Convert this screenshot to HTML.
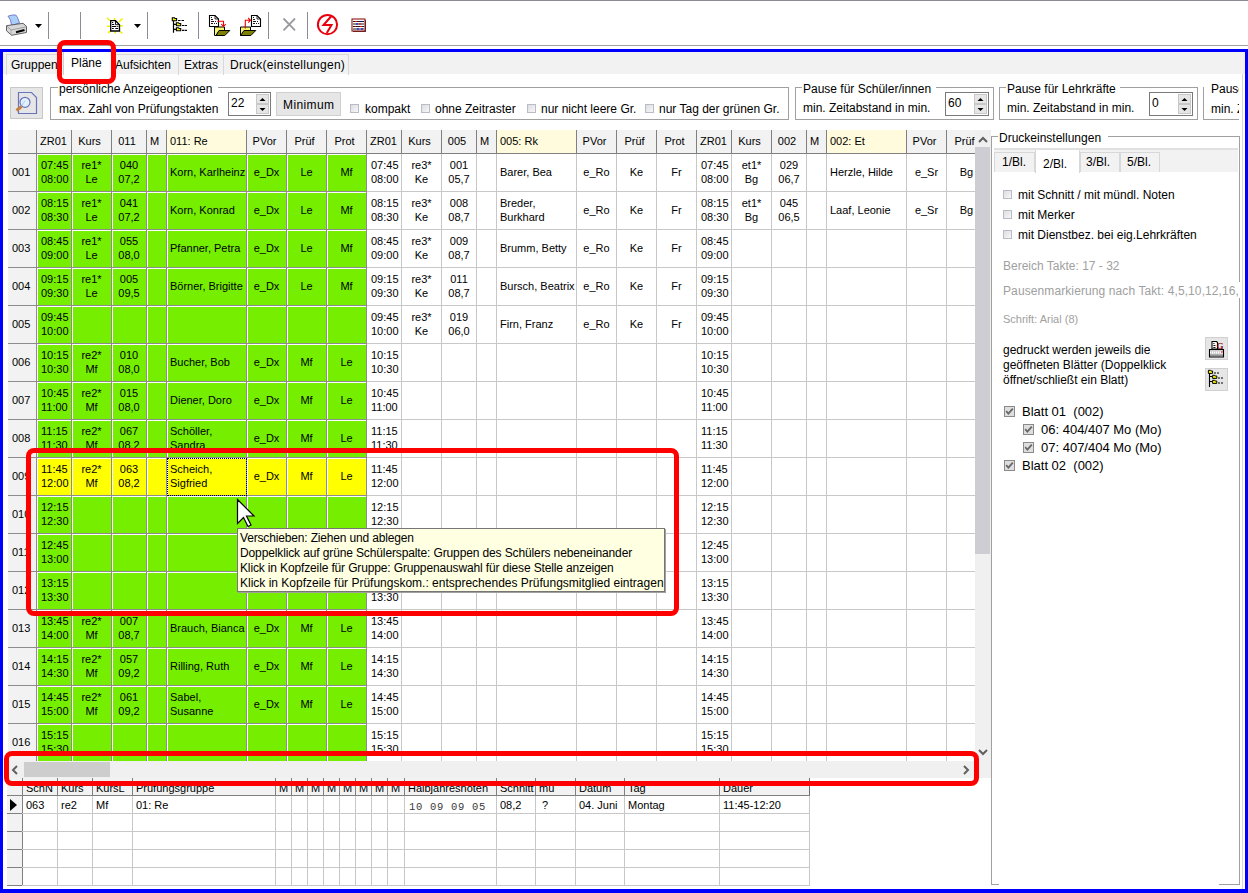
<!DOCTYPE html><html><head><meta charset="utf-8"><style>
*{margin:0;padding:0;box-sizing:border-box}
html,body{width:1248px;height:893px;overflow:hidden;background:#fff}
body{position:relative;font-family:"Liberation Sans",sans-serif;font-size:12px;color:#000}
div{position:absolute}
.t{white-space:nowrap;line-height:14px}
.g{font-size:11px;line-height:14px;white-space:nowrap}
</style></head><body>

<div style="left:0px;top:0px;width:1248px;height:1px;background:#8c8c96"></div>
<div style="left:48px;top:12px;width:1px;height:27px;background:#8c8c96"></div>
<div style="left:80px;top:12px;width:1px;height:27px;background:#8c8c96"></div>
<div style="left:147px;top:12px;width:1px;height:27px;background:#8c8c96"></div>
<div style="left:198px;top:12px;width:1px;height:27px;background:#8c8c96"></div>
<div style="left:268px;top:12px;width:1px;height:27px;background:#8c8c96"></div>
<div style="left:307px;top:12px;width:1px;height:27px;background:#8c8c96"></div>
<div style="left:0px;top:45px;width:1248px;height:1px;background:#a0a0a0"></div>
<div style="left:0px;top:49px;width:1248px;height:3px;background:#0000ff"></div>
<div style="left:0px;top:49px;width:3px;height:844px;background:#0000ff"></div>
<div style="left:1245px;top:49px;width:3px;height:844px;background:#0000ff"></div>
<div style="left:0px;top:889px;width:1248px;height:4px;background:#0000ff"></div>
<div style="left:3px;top:52px;width:1242px;height:22px;background:#f2f2f2"></div>
<div style="left:3px;top:74px;width:1242px;height:815px;background:#fff"></div>
<div style="left:1242px;top:74px;width:1px;height:815px;background:#d8d8d8"></div>
<div style="left:6px;top:54px;width:58px;height:21px;border-left:1px solid #d8d8d8;border-right:1px solid #d8d8d8;border-top:1px solid #d8d8d8"></div>
<div class="t" style="left:11px;top:58px;font-size:12px">Gruppen</div>
<div style="left:63px;top:52px;width:50px;height:23px;background:#fff;border-left:1px solid #d0d0d0;border-right:1px solid #d0d0d0"></div>
<div class="t" style="left:71px;top:56px;font-size:12px">Pläne</div>
<div style="left:113px;top:54px;width:66px;height:21px;border-left:1px solid #d8d8d8;border-right:1px solid #d8d8d8;border-top:1px solid #d8d8d8"></div>
<div class="t" style="left:115px;top:58px;font-size:12px">Aufsichten</div>
<div style="left:178px;top:54px;width:46px;height:21px;border-left:1px solid #d8d8d8;border-right:1px solid #d8d8d8;border-top:1px solid #d8d8d8"></div>
<div class="t" style="left:184px;top:58px;font-size:12px">Extras</div>
<div style="left:223px;top:54px;width:126px;height:21px;border-left:1px solid #d8d8d8;border-right:1px solid #d8d8d8;border-top:1px solid #d8d8d8"></div>
<div class="t" style="left:230px;top:58px;font-size:12px;letter-spacing:0.25px">Druck(einstellungen)</div>
<div style="left:10px;top:87px;width:33px;height:32px;background:#e6e6e6;border:1px solid #c8c8c8"></div>
<svg style="position:absolute;left:8px;top:85px" width="38" height="36" viewBox="0 0 38 36">
<path d="M10.5 7.5 H23.5 L28.5 12.5 V28.5 H10.5 Z" fill="none" stroke="#6a74bc" stroke-width="1.2"/>
<circle cx="17" cy="17.3" r="5" fill="#e4eefa" stroke="#6a74bc" stroke-width="1.2"/>
<path d="M14 20.8 Q15 18 17 16" stroke="#9cd0f8" stroke-width="1" fill="none"/>
<path d="M13.5 21.5 L8.5 25.5" stroke="#c08040" stroke-width="3"/>
</svg>
<div style="left:50px;top:87px;width:1px;height:32px;background:#a0a0a0"></div>
<div style="left:788px;top:87px;width:1px;height:33px;background:#a0a0a0"></div>
<div style="left:50px;top:119px;width:738px;height:1px;background:#a0a0a0"></div>
<div style="left:50px;top:87px;width:8px;height:1px;background:#a0a0a0"></div>
<div style="left:218px;top:87px;width:570px;height:1px;background:#a0a0a0"></div>
<div class="t" style="left:59px;top:82px;font-size:12px">persönliche Anzeigeoptionen</div>
<div class="t" style="left:59px;top:102px;font-size:12px">max. Zahl von Prüfungstakten</div>
<div style="left:228px;top:92px;width:43px;height:24px;background:#fff;border:1px solid #7a7a7a"></div>
<div class="t" style="left:231px;top:96px;font-size:12px">22</div>
<div style="left:256px;top:94px;width:13px;height:10px;background:#e6e6e6;border:1px solid #c8c8c8"></div>
<div style="left:256px;top:104px;width:13px;height:10px;background:#e6e6e6;border:1px solid #c8c8c8"></div>
<svg style="position:absolute;left:256px;top:92px" width="13" height="24"><path d="M3.5 9 L6.5 6 L9.5 9 Z" fill="#000"/><path d="M3.5 16 L6.5 19 L9.5 16 Z" fill="#000"/></svg>
<div style="left:276px;top:92px;width:65px;height:24px;background:#e6e6e6;border:1px solid #cfcfcf"></div>
<div class="t" style="left:283px;top:98px;font-size:12px;letter-spacing:0.4px">Minimum</div>
<div style="left:350px;top:104px;width:9px;height:9px;background:linear-gradient(135deg,#dcdce4,#f8f8f8);border:1px solid #b8bcc4"></div>
<div class="t" style="left:365px;top:102px;">kompakt</div>
<div style="left:421px;top:104px;width:9px;height:9px;background:linear-gradient(135deg,#dcdce4,#f8f8f8);border:1px solid #b8bcc4"></div>
<div class="t" style="left:435px;top:102px;">ohne Zeitraster</div>
<div style="left:527px;top:104px;width:9px;height:9px;background:linear-gradient(135deg,#dcdce4,#f8f8f8);border:1px solid #b8bcc4"></div>
<div class="t" style="left:541px;top:102px;">nur nicht leere Gr.</div>
<div style="left:645px;top:104px;width:9px;height:9px;background:linear-gradient(135deg,#dcdce4,#f8f8f8);border:1px solid #b8bcc4"></div>
<div class="t" style="left:659px;top:102px;">nur Tag der grünen Gr.</div>
<div style="left:795px;top:87px;width:1px;height:32px;background:#a0a0a0"></div>
<div style="left:993px;top:87px;width:1px;height:33px;background:#a0a0a0"></div>
<div style="left:795px;top:119px;width:198px;height:1px;background:#a0a0a0"></div>
<div style="left:795px;top:87px;width:7px;height:1px;background:#a0a0a0"></div>
<div style="left:936px;top:87px;width:57px;height:1px;background:#a0a0a0"></div>
<div class="t" style="left:803px;top:82px;font-size:12px">Pause für Schüler/innen</div>
<div class="t" style="left:803px;top:101px;">min. Zeitabstand in min.</div>
<div style="left:945px;top:92px;width:44px;height:24px;background:#fff;border:1px solid #7a7a7a"></div>
<div class="t" style="left:948px;top:96px;font-size:12px">60</div>
<div style="left:974px;top:94px;width:13px;height:10px;background:#e6e6e6;border:1px solid #c8c8c8"></div>
<div style="left:974px;top:104px;width:13px;height:10px;background:#e6e6e6;border:1px solid #c8c8c8"></div>
<svg style="position:absolute;left:974px;top:92px" width="13" height="24"><path d="M3.5 9 L6.5 6 L9.5 9 Z" fill="#000"/><path d="M3.5 16 L6.5 19 L9.5 16 Z" fill="#000"/></svg>
<div style="left:999px;top:87px;width:1px;height:32px;background:#a0a0a0"></div>
<div style="left:1197px;top:87px;width:1px;height:33px;background:#a0a0a0"></div>
<div style="left:999px;top:119px;width:198px;height:1px;background:#a0a0a0"></div>
<div style="left:999px;top:87px;width:7px;height:1px;background:#a0a0a0"></div>
<div style="left:1120px;top:87px;width:77px;height:1px;background:#a0a0a0"></div>
<div class="t" style="left:1007px;top:82px;font-size:12px">Pause für Lehrkräfte</div>
<div class="t" style="left:1007px;top:101px;">min. Zeitabstand in min.</div>
<div style="left:1149px;top:92px;width:44px;height:24px;background:#fff;border:1px solid #7a7a7a"></div>
<div class="t" style="left:1152px;top:96px;font-size:12px">0</div>
<div style="left:1178px;top:94px;width:13px;height:10px;background:#e6e6e6;border:1px solid #c8c8c8"></div>
<div style="left:1178px;top:104px;width:13px;height:10px;background:#e6e6e6;border:1px solid #c8c8c8"></div>
<svg style="position:absolute;left:1178px;top:92px" width="13" height="24"><path d="M3.5 9 L6.5 6 L9.5 9 Z" fill="#000"/><path d="M3.5 16 L6.5 19 L9.5 16 Z" fill="#000"/></svg>
<div style="left:1203px;top:70px;width:36px;height:55px;overflow:hidden">
<div style="left:0;top:17px;width:1px;height:32px;background:#a0a0a0"></div>
<div style="left:0;top:49px;width:40px;height:1px;background:#a0a0a0"></div>
<div class="t" style="left:8px;top:12px">Pause für Lehrkräfte</div>
<div class="t" style="left:8px;top:32px">min. Zeitabstand</div>
</div>
<div style="left:8px;top:130px;width:967px;height:631px;overflow:hidden;background:#fff">
<div style="left:0px;top:0px;width:967px;height:23px;background:#f2f2f2"></div>
<div style="left:0px;top:23px;width:28px;height:608px;background:#f2f2f2"></div>
<div style="left:30px;top:25px;width:33px;height:36px;background:#76ee00"></div>
<div style="left:65px;top:25px;width:38px;height:36px;background:#76ee00"></div>
<div style="left:105px;top:25px;width:33px;height:36px;background:#76ee00"></div>
<div style="left:140px;top:25px;width:18px;height:36px;background:#76ee00"></div>
<div style="left:160px;top:25px;width:78px;height:36px;background:#76ee00"></div>
<div style="left:240px;top:25px;width:38px;height:36px;background:#76ee00"></div>
<div style="left:280px;top:25px;width:38px;height:36px;background:#76ee00"></div>
<div style="left:320px;top:25px;width:38px;height:36px;background:#76ee00"></div>
<div style="left:30px;top:63px;width:33px;height:36px;background:#76ee00"></div>
<div style="left:65px;top:63px;width:38px;height:36px;background:#76ee00"></div>
<div style="left:105px;top:63px;width:33px;height:36px;background:#76ee00"></div>
<div style="left:140px;top:63px;width:18px;height:36px;background:#76ee00"></div>
<div style="left:160px;top:63px;width:78px;height:36px;background:#76ee00"></div>
<div style="left:240px;top:63px;width:38px;height:36px;background:#76ee00"></div>
<div style="left:280px;top:63px;width:38px;height:36px;background:#76ee00"></div>
<div style="left:320px;top:63px;width:38px;height:36px;background:#76ee00"></div>
<div style="left:30px;top:101px;width:33px;height:36px;background:#76ee00"></div>
<div style="left:65px;top:101px;width:38px;height:36px;background:#76ee00"></div>
<div style="left:105px;top:101px;width:33px;height:36px;background:#76ee00"></div>
<div style="left:140px;top:101px;width:18px;height:36px;background:#76ee00"></div>
<div style="left:160px;top:101px;width:78px;height:36px;background:#76ee00"></div>
<div style="left:240px;top:101px;width:38px;height:36px;background:#76ee00"></div>
<div style="left:280px;top:101px;width:38px;height:36px;background:#76ee00"></div>
<div style="left:320px;top:101px;width:38px;height:36px;background:#76ee00"></div>
<div style="left:30px;top:139px;width:33px;height:36px;background:#76ee00"></div>
<div style="left:65px;top:139px;width:38px;height:36px;background:#76ee00"></div>
<div style="left:105px;top:139px;width:33px;height:36px;background:#76ee00"></div>
<div style="left:140px;top:139px;width:18px;height:36px;background:#76ee00"></div>
<div style="left:160px;top:139px;width:78px;height:36px;background:#76ee00"></div>
<div style="left:240px;top:139px;width:38px;height:36px;background:#76ee00"></div>
<div style="left:280px;top:139px;width:38px;height:36px;background:#76ee00"></div>
<div style="left:320px;top:139px;width:38px;height:36px;background:#76ee00"></div>
<div style="left:30px;top:177px;width:33px;height:36px;background:#76ee00"></div>
<div style="left:65px;top:177px;width:38px;height:36px;background:#76ee00"></div>
<div style="left:105px;top:177px;width:33px;height:36px;background:#76ee00"></div>
<div style="left:140px;top:177px;width:18px;height:36px;background:#76ee00"></div>
<div style="left:160px;top:177px;width:78px;height:36px;background:#76ee00"></div>
<div style="left:240px;top:177px;width:38px;height:36px;background:#76ee00"></div>
<div style="left:280px;top:177px;width:38px;height:36px;background:#76ee00"></div>
<div style="left:320px;top:177px;width:38px;height:36px;background:#76ee00"></div>
<div style="left:30px;top:215px;width:33px;height:36px;background:#76ee00"></div>
<div style="left:65px;top:215px;width:38px;height:36px;background:#76ee00"></div>
<div style="left:105px;top:215px;width:33px;height:36px;background:#76ee00"></div>
<div style="left:140px;top:215px;width:18px;height:36px;background:#76ee00"></div>
<div style="left:160px;top:215px;width:78px;height:36px;background:#76ee00"></div>
<div style="left:240px;top:215px;width:38px;height:36px;background:#76ee00"></div>
<div style="left:280px;top:215px;width:38px;height:36px;background:#76ee00"></div>
<div style="left:320px;top:215px;width:38px;height:36px;background:#76ee00"></div>
<div style="left:30px;top:253px;width:33px;height:36px;background:#76ee00"></div>
<div style="left:65px;top:253px;width:38px;height:36px;background:#76ee00"></div>
<div style="left:105px;top:253px;width:33px;height:36px;background:#76ee00"></div>
<div style="left:140px;top:253px;width:18px;height:36px;background:#76ee00"></div>
<div style="left:160px;top:253px;width:78px;height:36px;background:#76ee00"></div>
<div style="left:240px;top:253px;width:38px;height:36px;background:#76ee00"></div>
<div style="left:280px;top:253px;width:38px;height:36px;background:#76ee00"></div>
<div style="left:320px;top:253px;width:38px;height:36px;background:#76ee00"></div>
<div style="left:30px;top:291px;width:33px;height:36px;background:#76ee00"></div>
<div style="left:65px;top:291px;width:38px;height:36px;background:#76ee00"></div>
<div style="left:105px;top:291px;width:33px;height:36px;background:#76ee00"></div>
<div style="left:140px;top:291px;width:18px;height:36px;background:#76ee00"></div>
<div style="left:160px;top:291px;width:78px;height:36px;background:#76ee00"></div>
<div style="left:240px;top:291px;width:38px;height:36px;background:#76ee00"></div>
<div style="left:280px;top:291px;width:38px;height:36px;background:#76ee00"></div>
<div style="left:320px;top:291px;width:38px;height:36px;background:#76ee00"></div>
<div style="left:30px;top:329px;width:33px;height:36px;background:#ffff00"></div>
<div style="left:65px;top:329px;width:38px;height:36px;background:#ffff00"></div>
<div style="left:105px;top:329px;width:33px;height:36px;background:#ffff00"></div>
<div style="left:140px;top:329px;width:18px;height:36px;background:#ffff00"></div>
<div style="left:160px;top:329px;width:78px;height:36px;background:#ffff00"></div>
<div style="left:240px;top:329px;width:38px;height:36px;background:#ffff00"></div>
<div style="left:280px;top:329px;width:38px;height:36px;background:#ffff00"></div>
<div style="left:320px;top:329px;width:38px;height:36px;background:#ffff00"></div>
<div style="left:30px;top:367px;width:33px;height:36px;background:#76ee00"></div>
<div style="left:65px;top:367px;width:38px;height:36px;background:#76ee00"></div>
<div style="left:105px;top:367px;width:33px;height:36px;background:#76ee00"></div>
<div style="left:140px;top:367px;width:18px;height:36px;background:#76ee00"></div>
<div style="left:160px;top:367px;width:78px;height:36px;background:#76ee00"></div>
<div style="left:240px;top:367px;width:38px;height:36px;background:#76ee00"></div>
<div style="left:280px;top:367px;width:38px;height:36px;background:#76ee00"></div>
<div style="left:320px;top:367px;width:38px;height:36px;background:#76ee00"></div>
<div style="left:30px;top:405px;width:33px;height:36px;background:#76ee00"></div>
<div style="left:65px;top:405px;width:38px;height:36px;background:#76ee00"></div>
<div style="left:105px;top:405px;width:33px;height:36px;background:#76ee00"></div>
<div style="left:140px;top:405px;width:18px;height:36px;background:#76ee00"></div>
<div style="left:160px;top:405px;width:78px;height:36px;background:#76ee00"></div>
<div style="left:240px;top:405px;width:38px;height:36px;background:#76ee00"></div>
<div style="left:280px;top:405px;width:38px;height:36px;background:#76ee00"></div>
<div style="left:320px;top:405px;width:38px;height:36px;background:#76ee00"></div>
<div style="left:30px;top:443px;width:33px;height:36px;background:#76ee00"></div>
<div style="left:65px;top:443px;width:38px;height:36px;background:#76ee00"></div>
<div style="left:105px;top:443px;width:33px;height:36px;background:#76ee00"></div>
<div style="left:140px;top:443px;width:18px;height:36px;background:#76ee00"></div>
<div style="left:160px;top:443px;width:78px;height:36px;background:#76ee00"></div>
<div style="left:240px;top:443px;width:38px;height:36px;background:#76ee00"></div>
<div style="left:280px;top:443px;width:38px;height:36px;background:#76ee00"></div>
<div style="left:320px;top:443px;width:38px;height:36px;background:#76ee00"></div>
<div style="left:30px;top:481px;width:33px;height:36px;background:#76ee00"></div>
<div style="left:65px;top:481px;width:38px;height:36px;background:#76ee00"></div>
<div style="left:105px;top:481px;width:33px;height:36px;background:#76ee00"></div>
<div style="left:140px;top:481px;width:18px;height:36px;background:#76ee00"></div>
<div style="left:160px;top:481px;width:78px;height:36px;background:#76ee00"></div>
<div style="left:240px;top:481px;width:38px;height:36px;background:#76ee00"></div>
<div style="left:280px;top:481px;width:38px;height:36px;background:#76ee00"></div>
<div style="left:320px;top:481px;width:38px;height:36px;background:#76ee00"></div>
<div style="left:30px;top:519px;width:33px;height:36px;background:#76ee00"></div>
<div style="left:65px;top:519px;width:38px;height:36px;background:#76ee00"></div>
<div style="left:105px;top:519px;width:33px;height:36px;background:#76ee00"></div>
<div style="left:140px;top:519px;width:18px;height:36px;background:#76ee00"></div>
<div style="left:160px;top:519px;width:78px;height:36px;background:#76ee00"></div>
<div style="left:240px;top:519px;width:38px;height:36px;background:#76ee00"></div>
<div style="left:280px;top:519px;width:38px;height:36px;background:#76ee00"></div>
<div style="left:320px;top:519px;width:38px;height:36px;background:#76ee00"></div>
<div style="left:30px;top:557px;width:33px;height:36px;background:#76ee00"></div>
<div style="left:65px;top:557px;width:38px;height:36px;background:#76ee00"></div>
<div style="left:105px;top:557px;width:33px;height:36px;background:#76ee00"></div>
<div style="left:140px;top:557px;width:18px;height:36px;background:#76ee00"></div>
<div style="left:160px;top:557px;width:78px;height:36px;background:#76ee00"></div>
<div style="left:240px;top:557px;width:38px;height:36px;background:#76ee00"></div>
<div style="left:280px;top:557px;width:38px;height:36px;background:#76ee00"></div>
<div style="left:320px;top:557px;width:38px;height:36px;background:#76ee00"></div>
<div style="left:30px;top:595px;width:33px;height:36px;background:#76ee00"></div>
<div style="left:65px;top:595px;width:38px;height:36px;background:#76ee00"></div>
<div style="left:105px;top:595px;width:33px;height:36px;background:#76ee00"></div>
<div style="left:140px;top:595px;width:18px;height:36px;background:#76ee00"></div>
<div style="left:160px;top:595px;width:78px;height:36px;background:#76ee00"></div>
<div style="left:240px;top:595px;width:38px;height:36px;background:#76ee00"></div>
<div style="left:280px;top:595px;width:38px;height:36px;background:#76ee00"></div>
<div style="left:320px;top:595px;width:38px;height:36px;background:#76ee00"></div>
<div style="left:159px;top:0px;width:79px;height:23px;background:#fffbdc"></div>
<div style="left:489px;top:0px;width:79px;height:23px;background:#fffbdc"></div>
<div style="left:819px;top:0px;width:79px;height:23px;background:#fffbdc"></div>
<div style="left:358px;top:61px;width:609px;height:1px;background:#c8c8c8"></div>
<div style="left:358px;top:99px;width:609px;height:1px;background:#c8c8c8"></div>
<div style="left:358px;top:137px;width:609px;height:1px;background:#c8c8c8"></div>
<div style="left:358px;top:175px;width:609px;height:1px;background:#c8c8c8"></div>
<div style="left:358px;top:213px;width:609px;height:1px;background:#c8c8c8"></div>
<div style="left:358px;top:251px;width:609px;height:1px;background:#c8c8c8"></div>
<div style="left:358px;top:289px;width:609px;height:1px;background:#c8c8c8"></div>
<div style="left:358px;top:327px;width:609px;height:1px;background:#c8c8c8"></div>
<div style="left:358px;top:365px;width:609px;height:1px;background:#c8c8c8"></div>
<div style="left:358px;top:403px;width:609px;height:1px;background:#c8c8c8"></div>
<div style="left:358px;top:441px;width:609px;height:1px;background:#c8c8c8"></div>
<div style="left:358px;top:479px;width:609px;height:1px;background:#c8c8c8"></div>
<div style="left:358px;top:517px;width:609px;height:1px;background:#c8c8c8"></div>
<div style="left:358px;top:555px;width:609px;height:1px;background:#c8c8c8"></div>
<div style="left:358px;top:593px;width:609px;height:1px;background:#c8c8c8"></div>
<div style="left:358px;top:631px;width:609px;height:1px;background:#c8c8c8"></div>
<div style="left:393px;top:23px;width:1px;height:608px;background:#c8c8c8"></div>
<div style="left:433px;top:23px;width:1px;height:608px;background:#c8c8c8"></div>
<div style="left:468px;top:23px;width:1px;height:608px;background:#c8c8c8"></div>
<div style="left:488px;top:23px;width:1px;height:608px;background:#c8c8c8"></div>
<div style="left:568px;top:23px;width:1px;height:608px;background:#c8c8c8"></div>
<div style="left:608px;top:23px;width:1px;height:608px;background:#c8c8c8"></div>
<div style="left:648px;top:23px;width:1px;height:608px;background:#c8c8c8"></div>
<div style="left:688px;top:23px;width:1px;height:608px;background:#c8c8c8"></div>
<div style="left:723px;top:23px;width:1px;height:608px;background:#c8c8c8"></div>
<div style="left:763px;top:23px;width:1px;height:608px;background:#c8c8c8"></div>
<div style="left:798px;top:23px;width:1px;height:608px;background:#c8c8c8"></div>
<div style="left:818px;top:23px;width:1px;height:608px;background:#c8c8c8"></div>
<div style="left:898px;top:23px;width:1px;height:608px;background:#c8c8c8"></div>
<div style="left:938px;top:23px;width:1px;height:608px;background:#c8c8c8"></div>
<div style="left:978px;top:23px;width:1px;height:608px;background:#c8c8c8"></div>
<div style="left:0px;top:23px;width:359px;height:1px;background:#8c8c8c"></div>
<div style="left:0px;top:61px;width:359px;height:1px;background:#8c8c8c"></div>
<div style="left:0px;top:99px;width:359px;height:1px;background:#8c8c8c"></div>
<div style="left:0px;top:137px;width:359px;height:1px;background:#8c8c8c"></div>
<div style="left:0px;top:175px;width:359px;height:1px;background:#8c8c8c"></div>
<div style="left:0px;top:213px;width:359px;height:1px;background:#8c8c8c"></div>
<div style="left:0px;top:251px;width:359px;height:1px;background:#8c8c8c"></div>
<div style="left:0px;top:289px;width:359px;height:1px;background:#8c8c8c"></div>
<div style="left:0px;top:327px;width:359px;height:1px;background:#8c8c8c"></div>
<div style="left:0px;top:365px;width:359px;height:1px;background:#8c8c8c"></div>
<div style="left:0px;top:403px;width:359px;height:1px;background:#8c8c8c"></div>
<div style="left:0px;top:441px;width:359px;height:1px;background:#8c8c8c"></div>
<div style="left:0px;top:479px;width:359px;height:1px;background:#8c8c8c"></div>
<div style="left:0px;top:517px;width:359px;height:1px;background:#8c8c8c"></div>
<div style="left:0px;top:555px;width:359px;height:1px;background:#8c8c8c"></div>
<div style="left:0px;top:593px;width:359px;height:1px;background:#8c8c8c"></div>
<div style="left:0px;top:631px;width:359px;height:1px;background:#8c8c8c"></div>
<div style="left:28px;top:23px;width:1px;height:608px;background:#8c8c8c"></div>
<div style="left:63px;top:23px;width:1px;height:608px;background:#8c8c8c"></div>
<div style="left:103px;top:23px;width:1px;height:608px;background:#8c8c8c"></div>
<div style="left:138px;top:23px;width:1px;height:608px;background:#8c8c8c"></div>
<div style="left:158px;top:23px;width:1px;height:608px;background:#8c8c8c"></div>
<div style="left:238px;top:23px;width:1px;height:608px;background:#8c8c8c"></div>
<div style="left:278px;top:23px;width:1px;height:608px;background:#8c8c8c"></div>
<div style="left:318px;top:23px;width:1px;height:608px;background:#8c8c8c"></div>
<div style="left:358px;top:23px;width:1px;height:608px;background:#8c8c8c"></div>
<div style="left:28px;top:0px;width:1px;height:23px;background:#808080"></div>
<div style="left:63px;top:0px;width:1px;height:23px;background:#808080"></div>
<div style="left:103px;top:0px;width:1px;height:23px;background:#808080"></div>
<div style="left:138px;top:0px;width:1px;height:23px;background:#808080"></div>
<div style="left:158px;top:0px;width:1px;height:23px;background:#808080"></div>
<div style="left:238px;top:0px;width:1px;height:23px;background:#808080"></div>
<div style="left:278px;top:0px;width:1px;height:23px;background:#808080"></div>
<div style="left:318px;top:0px;width:1px;height:23px;background:#808080"></div>
<div style="left:358px;top:0px;width:1px;height:23px;background:#808080"></div>
<div style="left:393px;top:0px;width:1px;height:23px;background:#808080"></div>
<div style="left:433px;top:0px;width:1px;height:23px;background:#808080"></div>
<div style="left:468px;top:0px;width:1px;height:23px;background:#808080"></div>
<div style="left:488px;top:0px;width:1px;height:23px;background:#808080"></div>
<div style="left:568px;top:0px;width:1px;height:23px;background:#808080"></div>
<div style="left:608px;top:0px;width:1px;height:23px;background:#808080"></div>
<div style="left:648px;top:0px;width:1px;height:23px;background:#808080"></div>
<div style="left:688px;top:0px;width:1px;height:23px;background:#808080"></div>
<div style="left:723px;top:0px;width:1px;height:23px;background:#808080"></div>
<div style="left:763px;top:0px;width:1px;height:23px;background:#808080"></div>
<div style="left:798px;top:0px;width:1px;height:23px;background:#808080"></div>
<div style="left:818px;top:0px;width:1px;height:23px;background:#808080"></div>
<div style="left:898px;top:0px;width:1px;height:23px;background:#808080"></div>
<div style="left:938px;top:0px;width:1px;height:23px;background:#808080"></div>
<div style="left:978px;top:0px;width:1px;height:23px;background:#808080"></div>
<div style="left:0px;top:23px;width:967px;height:1px;background:#808080"></div>
<div class="g" style="left:32px;top:4px;">ZR01</div>
<div class="g" style="left:63px;top:4px;width:37px;text-align:center;">Kurs</div>
<div class="g" style="left:103px;top:4px;width:32px;text-align:center;">011</div>
<div class="g" style="left:142px;top:4px;">M</div>
<div class="g" style="left:162px;top:4px;">011: Re</div>
<div class="g" style="left:238px;top:4px;width:37px;text-align:center;">PVor</div>
<div class="g" style="left:278px;top:4px;width:37px;text-align:center;">Prüf</div>
<div class="g" style="left:318px;top:4px;width:37px;text-align:center;">Prot</div>
<div class="g" style="left:362px;top:4px;">ZR01</div>
<div class="g" style="left:393px;top:4px;width:37px;text-align:center;">Kurs</div>
<div class="g" style="left:433px;top:4px;width:32px;text-align:center;">005</div>
<div class="g" style="left:472px;top:4px;">M</div>
<div class="g" style="left:492px;top:4px;">005: Rk</div>
<div class="g" style="left:568px;top:4px;width:37px;text-align:center;">PVor</div>
<div class="g" style="left:608px;top:4px;width:37px;text-align:center;">Prüf</div>
<div class="g" style="left:648px;top:4px;width:37px;text-align:center;">Prot</div>
<div class="g" style="left:692px;top:4px;">ZR01</div>
<div class="g" style="left:723px;top:4px;width:37px;text-align:center;">Kurs</div>
<div class="g" style="left:763px;top:4px;width:32px;text-align:center;">002</div>
<div class="g" style="left:802px;top:4px;">M</div>
<div class="g" style="left:822px;top:4px;">002: Et</div>
<div class="g" style="left:898px;top:4px;width:37px;text-align:center;">PVor</div>
<div class="g" style="left:938px;top:4px;width:37px;text-align:center;">Prüf</div>
<div class="g" style="left:978px;top:4px;width:37px;text-align:center;">Prot</div>
<div class="g" style="left:4px;top:35px;">001</div>
<div class="g" style="left:4px;top:73px;">002</div>
<div class="g" style="left:4px;top:111px;">003</div>
<div class="g" style="left:4px;top:149px;">004</div>
<div class="g" style="left:4px;top:187px;">005</div>
<div class="g" style="left:4px;top:225px;">006</div>
<div class="g" style="left:4px;top:263px;">007</div>
<div class="g" style="left:4px;top:301px;">008</div>
<div class="g" style="left:4px;top:339px;">009</div>
<div class="g" style="left:4px;top:377px;">010</div>
<div class="g" style="left:4px;top:415px;">011</div>
<div class="g" style="left:4px;top:453px;">012</div>
<div class="g" style="left:4px;top:491px;">013</div>
<div class="g" style="left:4px;top:529px;">014</div>
<div class="g" style="left:4px;top:567px;">015</div>
<div class="g" style="left:4px;top:605px;">016</div>
<div class="g" style="left:33px;top:28px;">07:45</div>
<div class="g" style="left:33px;top:42px;">08:00</div>
<div class="g" style="left:64px;top:28px;width:39px;text-align:center;">re1*</div>
<div class="g" style="left:64px;top:42px;width:39px;text-align:center;">Le</div>
<div class="g" style="left:104px;top:28px;width:34px;text-align:center;">040</div>
<div class="g" style="left:104px;top:42px;width:34px;text-align:center;">07,2</div>
<div class="g" style="left:162px;top:35px;">Korn, Karlheinz</div>
<div class="g" style="left:239px;top:35px;width:39px;text-align:center;">e_Dx</div>
<div class="g" style="left:279px;top:35px;width:39px;text-align:center;">Le</div>
<div class="g" style="left:319px;top:35px;width:39px;text-align:center;">Mf</div>
<div class="g" style="left:363px;top:28px;">07:45</div>
<div class="g" style="left:363px;top:42px;">08:00</div>
<div class="g" style="left:394px;top:28px;width:39px;text-align:center;">re3*</div>
<div class="g" style="left:394px;top:42px;width:39px;text-align:center;">Ke</div>
<div class="g" style="left:434px;top:28px;width:34px;text-align:center;">001</div>
<div class="g" style="left:434px;top:42px;width:34px;text-align:center;">05,7</div>
<div class="g" style="left:492px;top:35px;">Barer, Bea</div>
<div class="g" style="left:569px;top:35px;width:39px;text-align:center;">e_Ro</div>
<div class="g" style="left:609px;top:35px;width:39px;text-align:center;">Ke</div>
<div class="g" style="left:649px;top:35px;width:39px;text-align:center;">Fr</div>
<div class="g" style="left:693px;top:28px;">07:45</div>
<div class="g" style="left:693px;top:42px;">08:00</div>
<div class="g" style="left:724px;top:28px;width:39px;text-align:center;">et1*</div>
<div class="g" style="left:724px;top:42px;width:39px;text-align:center;">Bg</div>
<div class="g" style="left:764px;top:28px;width:34px;text-align:center;">029</div>
<div class="g" style="left:764px;top:42px;width:34px;text-align:center;">06,7</div>
<div class="g" style="left:822px;top:35px;">Herzle, Hilde</div>
<div class="g" style="left:899px;top:35px;width:39px;text-align:center;">e_Sr</div>
<div class="g" style="left:939px;top:35px;width:39px;text-align:center;">Bg</div>
<div class="g" style="left:979px;top:35px;width:39px;text-align:center;"></div>
<div class="g" style="left:33px;top:66px;">08:15</div>
<div class="g" style="left:33px;top:80px;">08:30</div>
<div class="g" style="left:64px;top:66px;width:39px;text-align:center;">re1*</div>
<div class="g" style="left:64px;top:80px;width:39px;text-align:center;">Le</div>
<div class="g" style="left:104px;top:66px;width:34px;text-align:center;">041</div>
<div class="g" style="left:104px;top:80px;width:34px;text-align:center;">07,2</div>
<div class="g" style="left:162px;top:73px;">Korn, Konrad</div>
<div class="g" style="left:239px;top:73px;width:39px;text-align:center;">e_Dx</div>
<div class="g" style="left:279px;top:73px;width:39px;text-align:center;">Le</div>
<div class="g" style="left:319px;top:73px;width:39px;text-align:center;">Mf</div>
<div class="g" style="left:363px;top:66px;">08:15</div>
<div class="g" style="left:363px;top:80px;">08:30</div>
<div class="g" style="left:394px;top:66px;width:39px;text-align:center;">re3*</div>
<div class="g" style="left:394px;top:80px;width:39px;text-align:center;">Ke</div>
<div class="g" style="left:434px;top:66px;width:34px;text-align:center;">008</div>
<div class="g" style="left:434px;top:80px;width:34px;text-align:center;">08,7</div>
<div class="g" style="left:492px;top:66px;">Breder,</div>
<div class="g" style="left:492px;top:80px;">Burkhard</div>
<div class="g" style="left:569px;top:73px;width:39px;text-align:center;">e_Ro</div>
<div class="g" style="left:609px;top:73px;width:39px;text-align:center;">Ke</div>
<div class="g" style="left:649px;top:73px;width:39px;text-align:center;">Fr</div>
<div class="g" style="left:693px;top:66px;">08:15</div>
<div class="g" style="left:693px;top:80px;">08:30</div>
<div class="g" style="left:724px;top:66px;width:39px;text-align:center;">et1*</div>
<div class="g" style="left:724px;top:80px;width:39px;text-align:center;">Bg</div>
<div class="g" style="left:764px;top:66px;width:34px;text-align:center;">045</div>
<div class="g" style="left:764px;top:80px;width:34px;text-align:center;">06,5</div>
<div class="g" style="left:822px;top:73px;">Laaf, Leonie</div>
<div class="g" style="left:899px;top:73px;width:39px;text-align:center;">e_Sr</div>
<div class="g" style="left:939px;top:73px;width:39px;text-align:center;">Bg</div>
<div class="g" style="left:979px;top:73px;width:39px;text-align:center;"></div>
<div class="g" style="left:33px;top:104px;">08:45</div>
<div class="g" style="left:33px;top:118px;">09:00</div>
<div class="g" style="left:64px;top:104px;width:39px;text-align:center;">re1*</div>
<div class="g" style="left:64px;top:118px;width:39px;text-align:center;">Le</div>
<div class="g" style="left:104px;top:104px;width:34px;text-align:center;">055</div>
<div class="g" style="left:104px;top:118px;width:34px;text-align:center;">08,0</div>
<div class="g" style="left:162px;top:111px;">Pfanner, Petra</div>
<div class="g" style="left:239px;top:111px;width:39px;text-align:center;">e_Dx</div>
<div class="g" style="left:279px;top:111px;width:39px;text-align:center;">Le</div>
<div class="g" style="left:319px;top:111px;width:39px;text-align:center;">Mf</div>
<div class="g" style="left:363px;top:104px;">08:45</div>
<div class="g" style="left:363px;top:118px;">09:00</div>
<div class="g" style="left:394px;top:104px;width:39px;text-align:center;">re3*</div>
<div class="g" style="left:394px;top:118px;width:39px;text-align:center;">Ke</div>
<div class="g" style="left:434px;top:104px;width:34px;text-align:center;">009</div>
<div class="g" style="left:434px;top:118px;width:34px;text-align:center;">08,7</div>
<div class="g" style="left:492px;top:111px;">Brumm, Betty</div>
<div class="g" style="left:569px;top:111px;width:39px;text-align:center;">e_Ro</div>
<div class="g" style="left:609px;top:111px;width:39px;text-align:center;">Ke</div>
<div class="g" style="left:649px;top:111px;width:39px;text-align:center;">Fr</div>
<div class="g" style="left:693px;top:104px;">08:45</div>
<div class="g" style="left:693px;top:118px;">09:00</div>
<div class="g" style="left:33px;top:142px;">09:15</div>
<div class="g" style="left:33px;top:156px;">09:30</div>
<div class="g" style="left:64px;top:142px;width:39px;text-align:center;">re1*</div>
<div class="g" style="left:64px;top:156px;width:39px;text-align:center;">Le</div>
<div class="g" style="left:104px;top:142px;width:34px;text-align:center;">005</div>
<div class="g" style="left:104px;top:156px;width:34px;text-align:center;">09,5</div>
<div class="g" style="left:162px;top:149px;">Börner, Brigitte</div>
<div class="g" style="left:239px;top:149px;width:39px;text-align:center;">e_Dx</div>
<div class="g" style="left:279px;top:149px;width:39px;text-align:center;">Le</div>
<div class="g" style="left:319px;top:149px;width:39px;text-align:center;">Mf</div>
<div class="g" style="left:363px;top:142px;">09:15</div>
<div class="g" style="left:363px;top:156px;">09:30</div>
<div class="g" style="left:394px;top:142px;width:39px;text-align:center;">re3*</div>
<div class="g" style="left:394px;top:156px;width:39px;text-align:center;">Ke</div>
<div class="g" style="left:434px;top:142px;width:34px;text-align:center;">011</div>
<div class="g" style="left:434px;top:156px;width:34px;text-align:center;">08,7</div>
<div class="g" style="left:492px;top:149px;">Bursch, Beatrix</div>
<div class="g" style="left:569px;top:149px;width:39px;text-align:center;">e_Ro</div>
<div class="g" style="left:609px;top:149px;width:39px;text-align:center;">Ke</div>
<div class="g" style="left:649px;top:149px;width:39px;text-align:center;">Fr</div>
<div class="g" style="left:693px;top:142px;">09:15</div>
<div class="g" style="left:693px;top:156px;">09:30</div>
<div class="g" style="left:33px;top:180px;">09:45</div>
<div class="g" style="left:33px;top:194px;">10:00</div>
<div class="g" style="left:363px;top:180px;">09:45</div>
<div class="g" style="left:363px;top:194px;">10:00</div>
<div class="g" style="left:394px;top:180px;width:39px;text-align:center;">re3*</div>
<div class="g" style="left:394px;top:194px;width:39px;text-align:center;">Ke</div>
<div class="g" style="left:434px;top:180px;width:34px;text-align:center;">019</div>
<div class="g" style="left:434px;top:194px;width:34px;text-align:center;">06,0</div>
<div class="g" style="left:492px;top:187px;">Firn, Franz</div>
<div class="g" style="left:569px;top:187px;width:39px;text-align:center;">e_Ro</div>
<div class="g" style="left:609px;top:187px;width:39px;text-align:center;">Ke</div>
<div class="g" style="left:649px;top:187px;width:39px;text-align:center;">Fr</div>
<div class="g" style="left:693px;top:180px;">09:45</div>
<div class="g" style="left:693px;top:194px;">10:00</div>
<div class="g" style="left:33px;top:218px;">10:15</div>
<div class="g" style="left:33px;top:232px;">10:30</div>
<div class="g" style="left:64px;top:218px;width:39px;text-align:center;">re2*</div>
<div class="g" style="left:64px;top:232px;width:39px;text-align:center;">Mf</div>
<div class="g" style="left:104px;top:218px;width:34px;text-align:center;">010</div>
<div class="g" style="left:104px;top:232px;width:34px;text-align:center;">08,0</div>
<div class="g" style="left:162px;top:225px;">Bucher, Bob</div>
<div class="g" style="left:239px;top:225px;width:39px;text-align:center;">e_Dx</div>
<div class="g" style="left:279px;top:225px;width:39px;text-align:center;">Mf</div>
<div class="g" style="left:319px;top:225px;width:39px;text-align:center;">Le</div>
<div class="g" style="left:363px;top:218px;">10:15</div>
<div class="g" style="left:363px;top:232px;">10:30</div>
<div class="g" style="left:693px;top:218px;">10:15</div>
<div class="g" style="left:693px;top:232px;">10:30</div>
<div class="g" style="left:33px;top:256px;">10:45</div>
<div class="g" style="left:33px;top:270px;">11:00</div>
<div class="g" style="left:64px;top:256px;width:39px;text-align:center;">re2*</div>
<div class="g" style="left:64px;top:270px;width:39px;text-align:center;">Mf</div>
<div class="g" style="left:104px;top:256px;width:34px;text-align:center;">015</div>
<div class="g" style="left:104px;top:270px;width:34px;text-align:center;">08,0</div>
<div class="g" style="left:162px;top:263px;">Diener, Doro</div>
<div class="g" style="left:239px;top:263px;width:39px;text-align:center;">e_Dx</div>
<div class="g" style="left:279px;top:263px;width:39px;text-align:center;">Mf</div>
<div class="g" style="left:319px;top:263px;width:39px;text-align:center;">Le</div>
<div class="g" style="left:363px;top:256px;">10:45</div>
<div class="g" style="left:363px;top:270px;">11:00</div>
<div class="g" style="left:693px;top:256px;">10:45</div>
<div class="g" style="left:693px;top:270px;">11:00</div>
<div class="g" style="left:33px;top:294px;">11:15</div>
<div class="g" style="left:33px;top:308px;">11:30</div>
<div class="g" style="left:64px;top:294px;width:39px;text-align:center;">re2*</div>
<div class="g" style="left:64px;top:308px;width:39px;text-align:center;">Mf</div>
<div class="g" style="left:104px;top:294px;width:34px;text-align:center;">067</div>
<div class="g" style="left:104px;top:308px;width:34px;text-align:center;">08,2</div>
<div class="g" style="left:162px;top:294px;">Schöller,</div>
<div class="g" style="left:162px;top:308px;">Sandra</div>
<div class="g" style="left:239px;top:301px;width:39px;text-align:center;">e_Dx</div>
<div class="g" style="left:279px;top:301px;width:39px;text-align:center;">Mf</div>
<div class="g" style="left:319px;top:301px;width:39px;text-align:center;">Le</div>
<div class="g" style="left:363px;top:294px;">11:15</div>
<div class="g" style="left:363px;top:308px;">11:30</div>
<div class="g" style="left:693px;top:294px;">11:15</div>
<div class="g" style="left:693px;top:308px;">11:30</div>
<div class="g" style="left:33px;top:332px;">11:45</div>
<div class="g" style="left:33px;top:346px;">12:00</div>
<div class="g" style="left:64px;top:332px;width:39px;text-align:center;">re2*</div>
<div class="g" style="left:64px;top:346px;width:39px;text-align:center;">Mf</div>
<div class="g" style="left:104px;top:332px;width:34px;text-align:center;">063</div>
<div class="g" style="left:104px;top:346px;width:34px;text-align:center;">08,2</div>
<div class="g" style="left:162px;top:332px;">Scheich,</div>
<div class="g" style="left:162px;top:346px;">Sigfried</div>
<div class="g" style="left:239px;top:339px;width:39px;text-align:center;">e_Dx</div>
<div class="g" style="left:279px;top:339px;width:39px;text-align:center;">Mf</div>
<div class="g" style="left:319px;top:339px;width:39px;text-align:center;">Le</div>
<div class="g" style="left:363px;top:332px;">11:45</div>
<div class="g" style="left:363px;top:346px;">12:00</div>
<div class="g" style="left:693px;top:332px;">11:45</div>
<div class="g" style="left:693px;top:346px;">12:00</div>
<div class="g" style="left:33px;top:370px;">12:15</div>
<div class="g" style="left:33px;top:384px;">12:30</div>
<div class="g" style="left:363px;top:370px;">12:15</div>
<div class="g" style="left:363px;top:384px;">12:30</div>
<div class="g" style="left:693px;top:370px;">12:15</div>
<div class="g" style="left:693px;top:384px;">12:30</div>
<div class="g" style="left:33px;top:408px;">12:45</div>
<div class="g" style="left:33px;top:422px;">13:00</div>
<div class="g" style="left:363px;top:408px;">12:45</div>
<div class="g" style="left:363px;top:422px;">13:00</div>
<div class="g" style="left:693px;top:408px;">12:45</div>
<div class="g" style="left:693px;top:422px;">13:00</div>
<div class="g" style="left:33px;top:446px;">13:15</div>
<div class="g" style="left:33px;top:460px;">13:30</div>
<div class="g" style="left:363px;top:446px;">13:15</div>
<div class="g" style="left:363px;top:460px;">13:30</div>
<div class="g" style="left:693px;top:446px;">13:15</div>
<div class="g" style="left:693px;top:460px;">13:30</div>
<div class="g" style="left:33px;top:484px;">13:45</div>
<div class="g" style="left:33px;top:498px;">14:00</div>
<div class="g" style="left:64px;top:484px;width:39px;text-align:center;">re2*</div>
<div class="g" style="left:64px;top:498px;width:39px;text-align:center;">Mf</div>
<div class="g" style="left:104px;top:484px;width:34px;text-align:center;">007</div>
<div class="g" style="left:104px;top:498px;width:34px;text-align:center;">08,7</div>
<div class="g" style="left:162px;top:491px;">Brauch, Bianca</div>
<div class="g" style="left:239px;top:491px;width:39px;text-align:center;">e_Dx</div>
<div class="g" style="left:279px;top:491px;width:39px;text-align:center;">Mf</div>
<div class="g" style="left:319px;top:491px;width:39px;text-align:center;">Le</div>
<div class="g" style="left:363px;top:484px;">13:45</div>
<div class="g" style="left:363px;top:498px;">14:00</div>
<div class="g" style="left:693px;top:484px;">13:45</div>
<div class="g" style="left:693px;top:498px;">14:00</div>
<div class="g" style="left:33px;top:522px;">14:15</div>
<div class="g" style="left:33px;top:536px;">14:30</div>
<div class="g" style="left:64px;top:522px;width:39px;text-align:center;">re2*</div>
<div class="g" style="left:64px;top:536px;width:39px;text-align:center;">Mf</div>
<div class="g" style="left:104px;top:522px;width:34px;text-align:center;">057</div>
<div class="g" style="left:104px;top:536px;width:34px;text-align:center;">09,2</div>
<div class="g" style="left:162px;top:529px;">Rilling, Ruth</div>
<div class="g" style="left:239px;top:529px;width:39px;text-align:center;">e_Dx</div>
<div class="g" style="left:279px;top:529px;width:39px;text-align:center;">Mf</div>
<div class="g" style="left:319px;top:529px;width:39px;text-align:center;">Le</div>
<div class="g" style="left:363px;top:522px;">14:15</div>
<div class="g" style="left:363px;top:536px;">14:30</div>
<div class="g" style="left:693px;top:522px;">14:15</div>
<div class="g" style="left:693px;top:536px;">14:30</div>
<div class="g" style="left:33px;top:560px;">14:45</div>
<div class="g" style="left:33px;top:574px;">15:00</div>
<div class="g" style="left:64px;top:560px;width:39px;text-align:center;">re2*</div>
<div class="g" style="left:64px;top:574px;width:39px;text-align:center;">Mf</div>
<div class="g" style="left:104px;top:560px;width:34px;text-align:center;">061</div>
<div class="g" style="left:104px;top:574px;width:34px;text-align:center;">09,2</div>
<div class="g" style="left:162px;top:560px;">Sabel,</div>
<div class="g" style="left:162px;top:574px;">Susanne</div>
<div class="g" style="left:239px;top:567px;width:39px;text-align:center;">e_Dx</div>
<div class="g" style="left:279px;top:567px;width:39px;text-align:center;">Mf</div>
<div class="g" style="left:319px;top:567px;width:39px;text-align:center;">Le</div>
<div class="g" style="left:363px;top:560px;">14:45</div>
<div class="g" style="left:363px;top:574px;">15:00</div>
<div class="g" style="left:693px;top:560px;">14:45</div>
<div class="g" style="left:693px;top:574px;">15:00</div>
<div class="g" style="left:33px;top:598px;">15:15</div>
<div class="g" style="left:33px;top:612px;">15:30</div>
<div class="g" style="left:363px;top:598px;">15:15</div>
<div class="g" style="left:363px;top:612px;">15:30</div>
<div class="g" style="left:693px;top:598px;">15:15</div>
<div class="g" style="left:693px;top:612px;">15:30</div>
<div style="left:159px;top:328px;width:80px;height:38px;border:1px dotted #000030"></div>
</div>
<div style="left:975px;top:130px;width:16px;height:648px;background:#f0f0f0"></div>
<div style="left:975px;top:147px;width:15px;height:407px;background:#cdcdd3"></div>
<svg style="position:absolute;left:975px;top:134px" width="16" height="12"><path d="M4 8 L8 4 L12 8" fill="none" stroke="#606060" stroke-width="2"/></svg>
<svg style="position:absolute;left:975px;top:746px" width="16" height="12"><path d="M4 4 L8 8 L12 4" fill="none" stroke="#606060" stroke-width="2"/></svg>
<div style="left:8px;top:761px;width:967px;height:17px;background:#f0f0f0"></div>
<div style="left:24px;top:762px;width:86px;height:15px;background:#cdcdcd"></div>
<svg style="position:absolute;left:9px;top:763px" width="12" height="14"><path d="M8 3 L4 7 L8 11" fill="none" stroke="#606060" stroke-width="2"/></svg>
<svg style="position:absolute;left:960px;top:763px" width="12" height="14"><path d="M4 3 L8 7 L4 11" fill="none" stroke="#606060" stroke-width="2"/></svg>
<div style="left:975px;top:761px;width:16px;height:17px;background:#f0f0f0"></div>
<div style="left:7px;top:778px;width:802px;height:17px;background:#f2f2f2"></div>
<div style="left:7px;top:795px;width:15px;height:91px;background:#f2f2f2"></div>
<div style="left:22px;top:778px;width:1px;height:17px;background:#808080"></div>
<div style="left:22px;top:795px;width:1px;height:91px;background:#c8c8c8"></div>
<div class="t" style="left:26px;top:781px;font-size:11px">SchN</div>
<div style="left:57px;top:778px;width:1px;height:17px;background:#808080"></div>
<div style="left:57px;top:795px;width:1px;height:91px;background:#c8c8c8"></div>
<div class="t" style="left:61px;top:781px;font-size:11px">Kurs</div>
<div style="left:92px;top:778px;width:1px;height:17px;background:#808080"></div>
<div style="left:92px;top:795px;width:1px;height:91px;background:#c8c8c8"></div>
<div class="t" style="left:96px;top:781px;font-size:11px">KursL</div>
<div style="left:132px;top:778px;width:1px;height:17px;background:#808080"></div>
<div style="left:132px;top:795px;width:1px;height:91px;background:#c8c8c8"></div>
<div class="t" style="left:136px;top:781px;font-size:11px">Prüfungsgruppe</div>
<div style="left:275px;top:778px;width:1px;height:17px;background:#808080"></div>
<div style="left:275px;top:795px;width:1px;height:91px;background:#c8c8c8"></div>
<div class="t" style="left:279px;top:781px;font-size:11px">M</div>
<div style="left:291px;top:778px;width:1px;height:17px;background:#808080"></div>
<div style="left:291px;top:795px;width:1px;height:91px;background:#c8c8c8"></div>
<div class="t" style="left:295px;top:781px;font-size:11px">M</div>
<div style="left:307px;top:778px;width:1px;height:17px;background:#808080"></div>
<div style="left:307px;top:795px;width:1px;height:91px;background:#c8c8c8"></div>
<div class="t" style="left:311px;top:781px;font-size:11px">M</div>
<div style="left:323px;top:778px;width:1px;height:17px;background:#808080"></div>
<div style="left:323px;top:795px;width:1px;height:91px;background:#c8c8c8"></div>
<div class="t" style="left:327px;top:781px;font-size:11px">M</div>
<div style="left:339px;top:778px;width:1px;height:17px;background:#808080"></div>
<div style="left:339px;top:795px;width:1px;height:91px;background:#c8c8c8"></div>
<div class="t" style="left:343px;top:781px;font-size:11px">M</div>
<div style="left:355px;top:778px;width:1px;height:17px;background:#808080"></div>
<div style="left:355px;top:795px;width:1px;height:91px;background:#c8c8c8"></div>
<div class="t" style="left:359px;top:781px;font-size:11px">M</div>
<div style="left:371px;top:778px;width:1px;height:17px;background:#808080"></div>
<div style="left:371px;top:795px;width:1px;height:91px;background:#c8c8c8"></div>
<div class="t" style="left:375px;top:781px;font-size:11px">M</div>
<div style="left:387px;top:778px;width:1px;height:17px;background:#808080"></div>
<div style="left:387px;top:795px;width:1px;height:91px;background:#c8c8c8"></div>
<div class="t" style="left:391px;top:781px;font-size:11px">M</div>
<div style="left:404px;top:778px;width:1px;height:17px;background:#808080"></div>
<div style="left:404px;top:795px;width:1px;height:91px;background:#c8c8c8"></div>
<div class="t" style="left:408px;top:781px;font-size:11px">Halbjahresnoten</div>
<div style="left:496px;top:778px;width:1px;height:17px;background:#808080"></div>
<div style="left:496px;top:795px;width:1px;height:91px;background:#c8c8c8"></div>
<div class="t" style="left:500px;top:781px;font-size:11px">Schnitt</div>
<div style="left:535px;top:778px;width:1px;height:17px;background:#808080"></div>
<div style="left:535px;top:795px;width:1px;height:91px;background:#c8c8c8"></div>
<div class="t" style="left:539px;top:781px;font-size:11px">mü</div>
<div style="left:575px;top:778px;width:1px;height:17px;background:#808080"></div>
<div style="left:575px;top:795px;width:1px;height:91px;background:#c8c8c8"></div>
<div class="t" style="left:579px;top:781px;font-size:11px">Datum</div>
<div style="left:624px;top:778px;width:1px;height:17px;background:#808080"></div>
<div style="left:624px;top:795px;width:1px;height:91px;background:#c8c8c8"></div>
<div class="t" style="left:628px;top:781px;font-size:11px">Tag</div>
<div style="left:719px;top:778px;width:1px;height:17px;background:#808080"></div>
<div style="left:719px;top:795px;width:1px;height:91px;background:#c8c8c8"></div>
<div class="t" style="left:723px;top:781px;font-size:11px">Dauer</div>
<div style="left:22px;top:795px;width:1px;height:91px;background:#808080"></div>
<div style="left:809px;top:778px;width:1px;height:17px;background:#707070"></div>
<div style="left:809px;top:795px;width:1px;height:91px;background:#c8c8c8"></div>
<div style="left:7px;top:795px;width:803px;height:1px;background:#808080"></div>
<div style="left:7px;top:813px;width:15px;height:1px;background:#808080"></div>
<div style="left:22px;top:813px;width:788px;height:1px;background:#c8c8c8"></div>
<div style="left:7px;top:831px;width:15px;height:1px;background:#808080"></div>
<div style="left:22px;top:831px;width:788px;height:1px;background:#c8c8c8"></div>
<div style="left:7px;top:849px;width:15px;height:1px;background:#808080"></div>
<div style="left:22px;top:849px;width:788px;height:1px;background:#c8c8c8"></div>
<div style="left:7px;top:867px;width:15px;height:1px;background:#808080"></div>
<div style="left:22px;top:867px;width:788px;height:1px;background:#c8c8c8"></div>
<div style="left:7px;top:885px;width:15px;height:1px;background:#808080"></div>
<div style="left:22px;top:885px;width:788px;height:1px;background:#c8c8c8"></div>
<svg style="position:absolute;left:9px;top:798px" width="10" height="14"><path d="M1 1 L8 7 L1 13 Z" fill="#000"/></svg>
<div class="t" style="left:26px;top:798px;font-size:11px">063</div>
<div class="t" style="left:61px;top:798px;font-size:11px">re2</div>
<div class="t" style="left:96px;top:798px;font-size:11px">Mf</div>
<div class="t" style="left:136px;top:798px;font-size:11px">01: Re</div>
<div class="t" style="left:500px;top:798px;font-size:11px">08,2</div>
<div class="t" style="left:542px;top:798px;font-size:11px">?</div>
<div class="t" style="left:579px;top:798px;font-size:11px">04. Juni</div>
<div class="t" style="left:628px;top:798px;font-size:11px">Montag</div>
<div class="t" style="left:723px;top:798px;font-size:11px">11:45-12:20</div>
<div class="t" style="left:409px;top:800px;font-family:&quot;Liberation Mono&quot;,monospace;font-size:10.5px;letter-spacing:0.7px;color:#383838">10 09 09 05</div>
<div style="left:991px;top:136px;width:1px;height:749px;background:#a0a0a0"></div>
<div style="left:1239px;top:136px;width:1px;height:749px;background:#a0a0a0"></div>
<div style="left:991px;top:136px;width:7px;height:1px;background:#a0a0a0"></div>
<div style="left:1108px;top:136px;width:131px;height:1px;background:#a0a0a0"></div>
<div style="left:991px;top:884px;width:8px;height:1px;background:#a0a0a0"></div>
<div style="left:1219px;top:884px;width:21px;height:1px;background:#a0a0a0"></div>
<div class="t" style="left:999px;top:131px;font-size:12px">Druckeinstellungen</div>
<div style="left:994px;top:148px;width:244px;height:24px;background:#f2f2f2"></div>
<div style="left:994px;top:148px;width:244px;height:2px;background:#e0e0e0"></div>
<div style="left:994px;top:152px;width:41px;height:20px;border-left:1px solid #d8d8d8;border-right:1px solid #d8d8d8;border-top:1px solid #d8d8d8"></div>
<div class="t" style="left:1002px;top:155px;">1/Bl.</div>
<div style="left:1035px;top:150px;width:45px;height:23px;background:#fff;border-left:1px solid #d8d8d8;border-right:1px solid #d8d8d8"></div>
<div class="t" style="left:1043px;top:157px;">2/Bl.</div>
<div style="left:1080px;top:152px;width:40px;height:20px;border-left:1px solid #d8d8d8;border-right:1px solid #d8d8d8;border-top:1px solid #d8d8d8"></div>
<div class="t" style="left:1086px;top:155px;">3/Bl.</div>
<div style="left:1120px;top:152px;width:40px;height:20px;border-left:1px solid #d8d8d8;border-right:1px solid #d8d8d8;border-top:1px solid #d8d8d8"></div>
<div class="t" style="left:1127px;top:155px;">5/Bl.</div>
<div style="left:1003px;top:190px;width:9px;height:9px;background:linear-gradient(135deg,#dcdce4,#f8f8f8);border:1px solid #b8bcc4"></div>
<div class="t" style="left:1018px;top:188px;">mit Schnitt / mit mündl. Noten</div>
<div style="left:1003px;top:210px;width:9px;height:9px;background:linear-gradient(135deg,#dcdce4,#f8f8f8);border:1px solid #b8bcc4"></div>
<div class="t" style="left:1018px;top:208px;">mit Merker</div>
<div style="left:1003px;top:230px;width:9px;height:9px;background:linear-gradient(135deg,#dcdce4,#f8f8f8);border:1px solid #b8bcc4"></div>
<div class="t" style="left:1018px;top:228px;">mit Dienstbez. bei eig.Lehrkräften</div>
<div class="t" style="left:1003px;top:259px;color:#a0a0a0">Bereich Takte: 17 - 32</div>
<div style="left:1239px;top:282px;width:1px;height:16px;background:#fff"></div>
<div style="left:1003px;top:280px;width:237px;height:20px;overflow:hidden"><div class="t" style="left:0;top:4px;color:#a0a0a0;letter-spacing:0.1px">Pausenmarkierung nach Takt: 4,5,10,12,16,</div></div>
<div class="t" style="left:1003px;top:312px;color:#a0a0a0;font-size:11px">Schrift: Arial (8)</div>
<div class="t" style="left:1003px;top:343px;line-height:15px">gedruckt werden jeweils die<br>geöffneten Blätter (Doppelklick<br>öffnet/schließt ein Blatt)</div>
<div style="left:1205px;top:337px;width:23px;height:23px;background:#e6e6e6;border:1px solid #d0d0d0"></div>
<div style="left:1205px;top:368px;width:23px;height:23px;background:#e6e6e6;border:1px solid #d0d0d0"></div>
<svg style="position:absolute;left:1205px;top:337px" width="23" height="54" viewBox="0 0 23 54">
<path d="M7 4.5 H11.5 L12.5 5.5 V12 H7 Z" fill="#fff" stroke="#000" stroke-width="1.1"/>
<path d="M8.3 6.5 H9.5 M8.3 8.5 H10.5 M8.3 10.5 H10.5" stroke="#000" stroke-width="0.9"/>
<text x="11.6" y="12.3" font-size="9" fill="#800000" font-family="Liberation Serif" font-weight="bold">G</text>
<path d="M4.5 12.5 H18.5 V20 H4.5 Z" fill="#d0d0d0" stroke="#000" stroke-width="1.1"/>
<path d="M5 15.5 H18" stroke="#fff" stroke-width="2" stroke-dasharray="1 1"/>
<circle cx="17" cy="15" r="0.8" fill="#f00"/>
<path d="M5 18.3 H18" stroke="#909090" stroke-width="1.6"/>
<path d="M4.5 35 V50 M4.5 39.5 H7.5 M4.5 44.5 H7.5" stroke="#000" stroke-width="1.1" fill="none"/>
<path d="M3.4 33.3 H5.5 L6 34 H7.6 V36.4 H3.4 Z" fill="#f4f000" stroke="#000" stroke-width="1"/>
<path d="M7.6 38.3 H9.7 L10.2 39 H11.8 V41.4 H7.6 Z" fill="#f4f000" stroke="#000" stroke-width="1"/>
<path d="M7.6 43.3 H9.7 L10.2 44 H11.8 V46.4 H7.6 Z" fill="#f4f000" stroke="#000" stroke-width="1"/>
<path d="M9 36 H11 M12 36 H14 M13 41 H15 M16 41 H18 M13 46 H15 M16 46 H18" stroke="#000" stroke-width="1"/>
</svg>
<div style="left:1004px;top:406px;width:11px;height:11px;background:#dedede;border:1px solid #8a8a8a"></div>
<svg style="position:absolute;left:1004px;top:406px" width="11" height="11"><path d="M2.2 5.2 L4.4 7.6 L8.8 2.6" fill="none" stroke="#686868" stroke-width="1.8"/></svg>
<div class="t" style="left:1022px;top:405px;font-size:13px">Blatt 01&nbsp;&nbsp;(002)</div>
<div style="left:1023px;top:424px;width:11px;height:11px;background:#dedede;border:1px solid #8a8a8a"></div>
<svg style="position:absolute;left:1023px;top:424px" width="11" height="11"><path d="M2.2 5.2 L4.4 7.6 L8.8 2.6" fill="none" stroke="#686868" stroke-width="1.8"/></svg>
<div class="t" style="left:1041px;top:423px;font-size:13px">06: 404/407 Mo (Mo)</div>
<div style="left:1023px;top:442px;width:11px;height:11px;background:#dedede;border:1px solid #8a8a8a"></div>
<svg style="position:absolute;left:1023px;top:442px" width="11" height="11"><path d="M2.2 5.2 L4.4 7.6 L8.8 2.6" fill="none" stroke="#686868" stroke-width="1.8"/></svg>
<div class="t" style="left:1041px;top:441px;font-size:13px">07: 407/404 Mo (Mo)</div>
<div style="left:1004px;top:460px;width:11px;height:11px;background:#dedede;border:1px solid #8a8a8a"></div>
<svg style="position:absolute;left:1004px;top:460px" width="11" height="11"><path d="M2.2 5.2 L4.4 7.6 L8.8 2.6" fill="none" stroke="#686868" stroke-width="1.8"/></svg>
<div class="t" style="left:1022px;top:459px;font-size:13px">Blatt 02&nbsp;&nbsp;(002)</div>
<svg style="position:absolute;left:0;top:0" width="400" height="45" viewBox="0 0 400 45">
<!-- printer -->
<path d="M8 16.2 L12.3 15 H15.8 L17.5 17.5 L19.5 23 L11.5 25.5 L10.5 20 Z" fill="#a8d0f8" stroke="#7070c8" stroke-width="0.9"/>
<path d="M6.5 25.7 L23 23.3 L26.5 26.3 V32.5 L11.5 35.3 L6.5 30.8 Z" fill="#d8d8d8" stroke="#505050" stroke-width="0.9"/>
<path d="M6.5 25.7 L11 30 L26.5 26.8" fill="none" stroke="#909090" stroke-width="0.8"/>
<path d="M11 30 V35" stroke="#a0a0a0" stroke-width="0.8"/>
<path d="M16 32.2 L24.5 30" stroke="#000" stroke-width="2"/>
<path d="M35 24 H42 L38.5 28 Z" fill="#000"/>
<!-- new doc -->
<path d="M107 18 L110 20.5 M114.5 18 V20 M122.5 18.5 L119 22 M107 26.3 H110 M120 25.8 H122.8 M108 32.8 L110.5 31 M115.3 33.5 V31.5 M122.5 33.5 L120 31.5" stroke="#f4f000" stroke-width="1.6"/>
<path d="M110.7 20.7 H115.5 L119.5 24.7 V31 H110.7 Z" fill="#fff" stroke="#000" stroke-width="1.3"/>
<path d="M115.5 20.7 V24.7 H119.5" fill="none" stroke="#000" stroke-width="0.9"/>
<path d="M112 22.5 H113.2 M112 24.5 H114.2 M112 26.5 H116.3 M117.3 26.5 H118.3 M112 28.5 H113.8 M115.3 28.5 H118.2" stroke="#000" stroke-width="1"/>
<path d="M134 24 H141 L137.5 28 Z" fill="#000"/>
<!-- tree -->
<path d="M173.5 20.5 V32.7 M173.5 24.4 H176.5 M173.5 29.4 H176.5" stroke="#000" stroke-width="1.2"/>
<path d="M172.3 17.8 H174.5 L175 18.5 H176.6 V20.8 H172.3 Z" fill="#f4f000" stroke="#000" stroke-width="1.1"/>
<path d="M176.4 22.8 H178.6 L179.1 23.5 H180.7 V25.8 H176.4 Z" fill="#f4f000" stroke="#000" stroke-width="1.1"/>
<path d="M176.4 27.8 H178.6 L179.1 28.5 H180.7 V30.8 H176.4 Z" fill="#f4f000" stroke="#000" stroke-width="1.1"/>
<path d="M178 20.5 H180.5 M181.5 20.5 H184 M182 25.5 H184.5 M185 25.5 H187 M182 30.4 H184.5 M185 30.4 H187" stroke="#000" stroke-width="1.1"/>
<!-- folder in -->
<path d="M209.5 15.5 H215 L218.5 19 V26.5 H209.5 Z" fill="#fff" stroke="#000" stroke-width="1.1"/>
<path d="M215 15.5 V19 H218.5" fill="none" stroke="#000" stroke-width="0.8"/>
<path d="M211 17.5 H212 M211 19.5 H213 M211 21.5 H214 M215 21.5 H216 M211 23.5 H213 M214 23.5 H215 M216 23.5 H217" stroke="#000" stroke-width="0.9"/>
<path d="M214.5 27 H224.5 V31 H219 L216 35.5 H214.5 Z" fill="#f8f870" stroke="#000" stroke-width="1"/>
<path d="M216 35.5 L219 30.5 H229.8 L224.8 35.5 Z" fill="#808000" stroke="#000" stroke-width="1"/>
<path d="M217.3 21.3 H223.5 V26.3 M221.2 24 L223.5 26.5 L225.8 24" fill="none" stroke="#f00000" stroke-width="1.1"/>
<!-- folder out -->
<path d="M251.5 15.5 H257 L260.5 19 V26.5 H251.5 Z" fill="#fff" stroke="#000" stroke-width="1.1"/>
<path d="M257 15.5 V19 H260.5" fill="none" stroke="#000" stroke-width="0.8"/>
<path d="M253 17.5 H254 M253 19.5 H255 M253 21.5 H256 M257 21.5 H258 M253 23.5 H255 M256 23.5 H257 M258 23.5 H259" stroke="#000" stroke-width="0.9"/>
<path d="M240.5 27 H250.5 V31 H244 L242 35.5 H240.5 Z" fill="#f8f870" stroke="#000" stroke-width="1"/>
<path d="M240.5 35.5 L244 30.5 H255.8 L250.8 35.5 Z" fill="#808000" stroke="#000" stroke-width="1"/>
<path d="M245.3 28.5 V20.3 H250.5 M248.2 18 L250.5 20.3 L248.2 22.6" fill="none" stroke="#f00000" stroke-width="1.1"/>
<!-- X -->
<path d="M283.5 18.5 L295 30.3 M295 18.5 L283.5 30.3" stroke="#9a9aa0" stroke-width="1.8"/>
<!-- lightning -->
<circle cx="327.5" cy="24.6" r="9.6" fill="none" stroke="#e8000c" stroke-width="2"/>
<path d="M331 16.5 L323.5 25 H331.5 L326.8 33" fill="none" stroke="#e8000c" stroke-width="2" stroke-linejoin="miter"/>
<!-- schedule -->
<rect x="353" y="20" width="13" height="12" fill="#604040"/>
<rect x="352" y="19" width="13" height="12" fill="#fff" stroke="#800000" stroke-width="1"/>
<path d="M353 21.5 H364 M353 24 H364 M353 26.5 H364 M353 29 H364" stroke="#000" stroke-width="0.9"/>
<path d="M355 21.5 H357 M359 24 H361 M355 26.5 H356 M360 26.5 H362" stroke="#ff0000" stroke-width="1.2"/>
<path d="M356 24 H358 M361 21.5 H362 M357 29 H359 M361 29 H363" stroke="#0000ff" stroke-width="1.2"/>
</svg>
<div style="left:237px;top:528px;width:428px;height:64px;background:#ffffe1;border:1px solid #767676;box-shadow:1px 1px 0 #a0a0a0"></div>
<div class="t" style="left:240px;top:531px;line-height:15px;font-size:12px"><span style="letter-spacing:-0.16px">Verschieben: Ziehen und ablegen</span><br><span style="letter-spacing:-0.125px">Doppelklick auf grüne Schülerspalte: Gruppen des Schülers nebeneinander</span><br><span style="letter-spacing:-0.14px">Klick in Kopfzeile für Gruppe: Gruppenauswahl für diese Stelle anzeigen</span><br>Klick in Kopfzeile für Prüfungskom.: entsprechendes Prüfungsmitglied eintragen</div>
<svg style="position:absolute;left:236px;top:498px" width="20" height="31" viewBox="0 0 20 31">
<path d="M1.5 1.5 V25.5 L7.5 19.5 L12 28.5 L15 27 L10.5 18 H18 Z" fill="#fff" stroke="#000" stroke-width="1.2" stroke-linejoin="miter"/>
</svg>
<div style="left:57px;top:40px;width:59px;height:44px;border:5px solid #ff0000;border-radius:8px"></div>
<div style="left:26px;top:448px;width:653px;height:168px;border:5px solid #ff0000;border-radius:8px"></div>
<div style="left:4px;top:751px;width:975px;height:35px;border:5px solid #ff0000;border-radius:8px"></div>
</body></html>
